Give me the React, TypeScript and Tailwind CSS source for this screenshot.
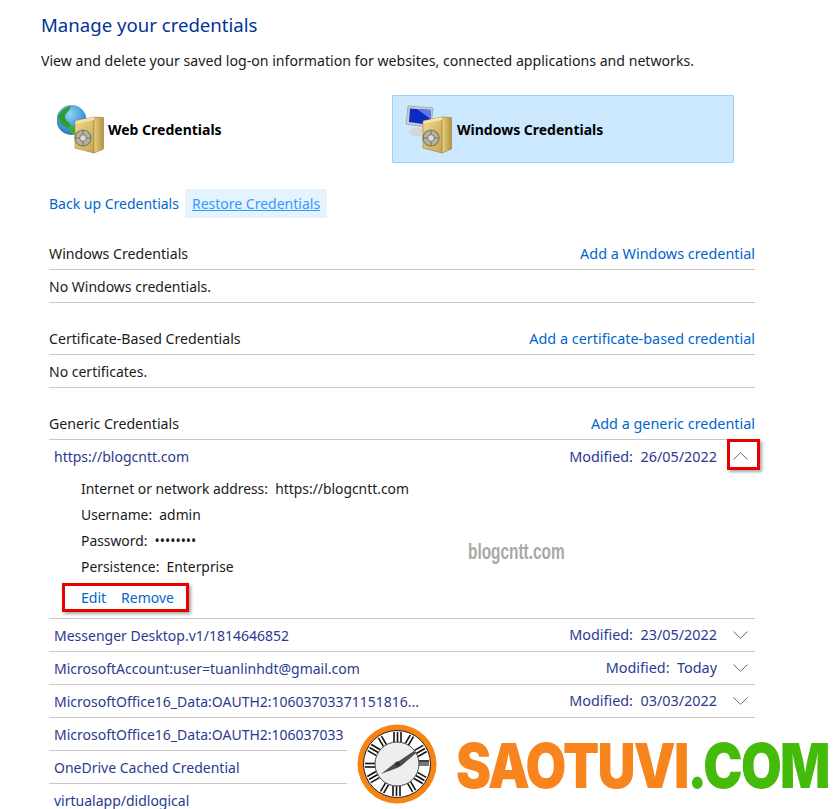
import React from 'react';

const font = "font-['Noto_Sans',sans-serif]";

function Safe() {
  return (
    <g>
      <path d="M18 20 L37 16 L37 52 L18 47 Z" fill="url(#safeFront)" stroke="#9a7f3a" strokeWidth="0.6" />
      <path d="M37 16 L46.5 16.5 L46.5 48 L37 52 Z" fill="url(#safeSide)" stroke="#9a7f3a" strokeWidth="0.6" />
      <path d="M18.5 20 L37 16 L37 19 L18.5 23 Z" fill="#f4e3a4" />
      <circle cx="26" cy="37" r="8" fill="#b4b2a4" stroke="#7c755e" strokeWidth="1.2" />
      <circle cx="26" cy="37" r="3.4" fill="#dddcd4" stroke="#7c755e" strokeWidth="1" />
      <path d="M26 29 V33.6 M26 40.4 V45 M18 37 H22.6 M29.4 37 H34" stroke="#7c755e" strokeWidth="1.1" />
    </g>
  );
}

function Defs({ id }: { id: string }) {
  return (
    <defs>
      <linearGradient id="safeFront" x1="0" y1="0" x2="1" y2="1">
        <stop offset="0" stopColor="#efd98e" />
        <stop offset="1" stopColor="#c8a650" />
      </linearGradient>
      <linearGradient id="safeSide" x1="0" y1="0" x2="1" y2="0">
        <stop offset="0" stopColor="#e8d084" />
        <stop offset="1" stopColor="#b2913f" />
      </linearGradient>
      <radialGradient id={id} cx="0.45" cy="0.3" r="0.8">
        <stop offset="0" stopColor="#8ad6f4" />
        <stop offset="1" stopColor="#1767b8" />
      </radialGradient>
    </defs>
  );
}

function WebIcon() {
  return (
    <svg width="51" height="56" viewBox="0 0 51 56" className="shrink-0">
      <Defs id="globeSea" />
      <circle cx="14.5" cy="19" r="15" fill="url(#globeSea)" />
      <path d="M1 16 C4 9 9 6 14 5 C13 10 8 12 8 16 C8 21 13 20 14 25 C10 29 4 25 1 16 Z" fill="#2f9a36" />
      <path d="M11 26 C15 24 18 27 20 26 L19 33 C16 34.5 13 33 11 26 Z" fill="#3cae3f" />
      <Safe />
    </svg>
  );
}

function WindowsIcon() {
  return (
    <svg width="52" height="56" viewBox="0 0 52 56" className="shrink-0">
      <Defs id="screenBlue" />
      <ellipse cx="12" cy="31" rx="8" ry="4.5" fill="#d4d6d6" />
      <path d="M3 5 L28 7 L26 27 L1 23 Z" fill="#c8cbd0" stroke="#9da2a8" strokeWidth="0.8" />
      <path d="M5 7.5 L26 9 L25 24 L4 21 Z" fill="#0c2bc4" />
      <path d="M12 8 L26 9 L25.5 18 Z" fill="#5a7be8" />
      <Safe />
    </svg>
  );
}

function Chevron({ up }: { up?: boolean }) {
  return (
    <svg width="15" height="8" viewBox="0 0 15 8" className="ml-[16px] shrink-0 text-[#6b6b6b]" fill="none" stroke="currentColor" strokeWidth="1">
      <polyline points={up ? '0.5,7.5 7.5,0.7 14.5,7.5' : '0.5,0.5 7.5,7.3 14.5,0.5'} />
    </svg>
  );
}

function SectionHeader({ title, action }: { title: string; action: string }) {
  return (
    <div className="flex h-[31px] items-start justify-between border-b border-[#c8c8c8] pt-1">
      <span className="text-[14.15px] text-[#1a1a1a]">{title}</span>
      <a className="text-[14.4px] text-[#0066cc]">{action}</a>
    </div>
  );
}

function Empty({ text }: { text: string }) {
  return <div className="flex h-[33px] items-center border-b border-[#c8c8c8] text-[14px] text-[#1a1a1a]">{text}</div>;
}

function CredRow({ name, modified }: { name: string; modified?: string }) {
  return (
    <div className="flex h-[33px] shrink-0 items-center justify-between border-b border-[#c8c8c8] pl-[5px] pr-[7px] text-[14px] text-[#2b3a8f]">
      <span>{name}</span>
      {modified && (
        <div className="flex items-center text-[14.4px]">
          <span>Modified:&nbsp; {modified}</span>
          <Chevron />
        </div>
      )}
    </div>
  );
}

function ClockLogo() {
  const ticks = Array.from({ length: 12 }, (_, i) => i * 30);
  return (
    <svg width="80" height="80" viewBox="0 0 80 80" className="shrink-0">
      <circle cx="40" cy="40" r="39.5" fill="#f78314" />
      <circle cx="40" cy="40" r="33.5" fill="#ffffff" stroke="#222222" strokeWidth="1" />
      {ticks.map((a) => (
        <g key={a} transform={`rotate(${a} 40 40)`} stroke="#111111" strokeWidth="1.6">
          <line x1="37" y1="8" x2="37" y2="18" />
          <line x1="40.5" y1="8" x2="40.5" y2="18" />
          {a % 60 === 0 && <line x1="44" y1="8" x2="44" y2="18" />}
        </g>
      ))}
      <rect x="62" y="38" width="10" height="4" fill="#777777" />
      <circle cx="40" cy="40" r="22" fill="#eeeeee" stroke="#444444" strokeWidth="1" />
      <path d="M24 50 L38 39 L42 37 L57 27 L59 29 L44 42 L40 44 Z" fill="#4d4d4d" />
      <circle cx="40.5" cy="40" r="2.5" fill="#333333" />
    </svg>
  );
}

export default function App() {
  return (
    <div className={`relative h-[809px] w-[836px] overflow-hidden bg-white ${font}`}>
      <div className="pl-[41px] pt-[12px]">
        <h1 className="text-[18.6px] leading-[26px] text-[#003399]">Manage your credentials</h1>
        <p className="mt-[10px] text-[14.13px] leading-[26px] text-[#1a1a1a]">
          View and delete your saved log-on information for websites, connected applications and networks.
        </p>

        <div className="mt-[21px] flex">
          <div className="flex h-[68px] w-[351px] items-center pl-[16px]">
            <WebIcon />
            <span className="text-[14px] font-bold text-black">Web Credentials</span>
          </div>
          <div className="flex h-[68px] w-[342px] items-center rounded-[1px] border border-[#99d1ff] bg-[#cce8ff] pl-[12px]">
            <WindowsIcon />
            <span className="text-[14px] font-bold text-black">Windows Credentials</span>
          </div>
        </div>

        <div className="mt-[25px] flex h-[30px] items-center pl-[8px] text-[14px]">
          <a className="w-[136px] text-[#0066cc]">Back up Credentials</a>
          <a className="rounded-[1px] bg-[#e5f3ff] px-[7px] py-[4px] text-[#3399ff] underline">Restore Credentials</a>
        </div>

        <div className="ml-[8px] mt-[21px] w-[706px]">
          <SectionHeader title="Windows Credentials" action="Add a Windows credential" />
          <Empty text="No Windows credentials." />

          <div className="h-[21px]" />
          <SectionHeader title="Certificate-Based Credentials" action="Add a certificate-based credential" />
          <Empty text="No certificates." />

          <div className="h-[21px]" />
          <SectionHeader title="Generic Credentials" action="Add a generic credential" />

          <div className="border-b border-[#c8c8c8] text-[14px]">
            <div className="flex h-[33px] items-center justify-between pl-[5px] pr-[7px] text-[#2b3a8f]">
              <span>https://blogcntt.com</span>
              <div className="flex items-center text-[14.4px]">
                <span>Modified:&nbsp; 26/05/2022</span>
                <Chevron up />
              </div>
            </div>
            <div className="flex flex-col gap-[6px] pl-[32px] pt-[6px] text-[13.87px] leading-[20px] text-[#1a1a1a]">
              <div>Internet or network address:&nbsp; https://blogcntt.com</div>
              <div>Username:&nbsp; admin</div>
              <div>Password:&nbsp; ••••••••</div>
              <div>Persistence:&nbsp; Enterprise</div>
            </div>
            <div className="flex h-[41px] items-start gap-[15px] pl-[32px] pt-[11px] leading-[20px] text-[#0066cc]">
              <a>Edit</a>
              <a>Remove</a>
            </div>
          </div>

          <CredRow name="Messenger Desktop.v1/1814646852" modified="23/05/2022" />
          <CredRow name="MicrosoftAccount:user=tuanlinhdt@gmail.com" modified="Today" />
          <CredRow name="MicrosoftOffice16_Data:OAUTH2:10603703371151816..." modified="03/03/2022" />
          <CredRow name="MicrosoftOffice16_Data:OAUTH2:106037033" />
          <CredRow name="OneDrive Cached Credential" />
          <CredRow name="virtualapp/didlogical" />
        </div>
      </div>

      {/* annotations pasted over the screenshot */}
      <div className="absolute left-[727px] top-[439px] h-[31px] w-[33px] border-[3px] border-[#e60000] shadow-[2px_2px_3px_rgba(0,0,0,0.35)]" />
      <div className="absolute left-[62px] top-[583px] h-[29px] w-[127px] border-[3px] border-[#e60000] shadow-[2px_2px_3px_rgba(0,0,0,0.35)]" />
      <div className="absolute left-[468px] top-[535px] origin-left scale-x-[0.7] font-['Liberation_Sans',sans-serif] text-[22px] font-bold text-[#a8a8a8]">
        blogcntt.com
      </div>

      <div className="absolute left-[347px] top-[718px] flex h-[91px] w-[489px] items-start bg-white pl-[10px] pt-[6px]">
        <ClockLogo />
        <div className="ml-[19px] mt-[6px] origin-left scale-x-[0.85] whitespace-nowrap font-['Inter',sans-serif] text-[62px] font-black leading-[72px] tracking-[-2px]">
          <span className="text-[#f7841c]">SAOTUVI</span>
          <span className="text-[#44bb0a]">.COM</span>
        </div>
      </div>
    </div>
  );
}
